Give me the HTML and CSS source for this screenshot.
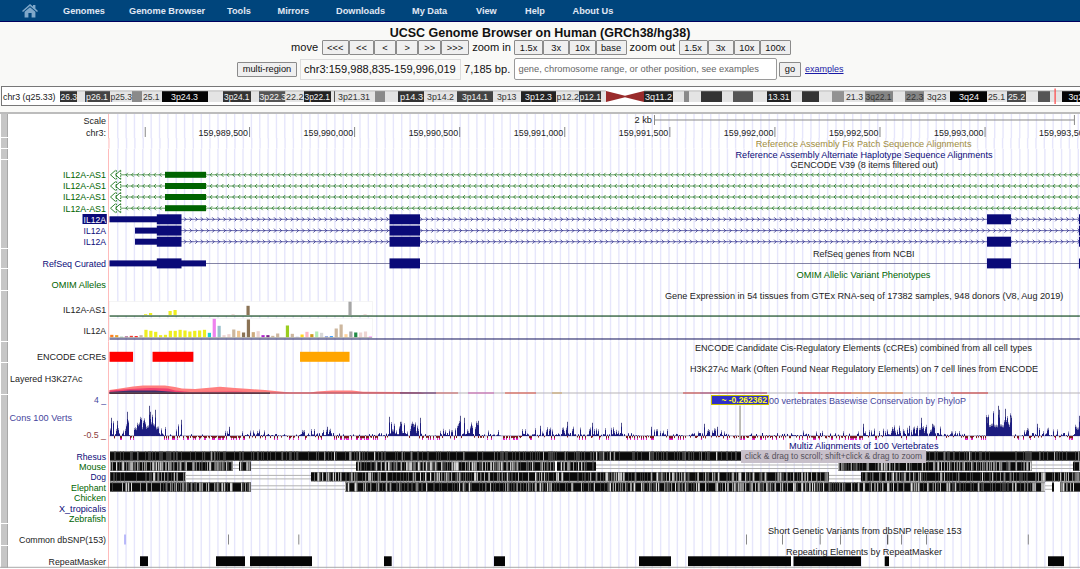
FILE: index.html
```html
<!DOCTYPE html>
<html lang="en">
<head>
<meta charset="utf-8">
<title>UCSC Genome Browser</title>
<link rel="stylesheet" href="styles.css">
</head>
<body>
<nav class="menu">
  <svg class="home" viewBox="0 0 16 14"><path d="M0 7 8 0l3 2.6V1h2.4v3.6L16 7l-1 1-7-6-7 6zM2.6 7.800 8 3.200l5.400 4.600V13.500H9.600V9H6.400v4.500H2.600z"/></svg>
  <a class="m1">Genomes</a><a class="m2">Genome Browser</a><a class="m3">Tools</a><a class="m4">Mirrors</a><a class="m5">Downloads</a><a class="m6">My Data</a><a class="m7">View</a><a class="m8">Help</a><a class="m9">About Us</a>
</nav>
<h1 class="title">UCSC Genome Browser on Human (GRCh38/hg38)</h1>
<div class="moves">
  <span class="word w-move">move</span>
  <button class="b27">&lt;&lt;&lt;</button><button class="b25">&lt;&lt;</button><button class="b22">&lt;</button><button class="b22">&gt;</button><button class="b23">&gt;&gt;</button><button class="b27">&gt;&gt;&gt;</button>
  <span class="word w-in">zoom in</span>
  <button class="b29">1.5x</button><button class="b26">3x</button><button class="b26">10x</button><button class="b31">base</button>
  <span class="word w-out">zoom out</span>
  <button class="b29">1.5x</button><button class="b26">3x</button><button class="b26">10x</button><button class="b31">100x</button>
</div>
<div class="search">
  <button class="multi">multi-region</button>
  <span class="position">chr3:159,988,835-159,996,019</span>
  <span class="size">7,185 bp.</span>
  <span class="query">gene, chromosome range, or other position, see examples</span>
  <button class="go">go</button>
  <a class="examples">examples</a>
</div>
<div class="ideogram"><svg id="ideogram" viewBox="0 86 1080 21"></svg></div>
<main class="tracks" id="tracks"></main>
<div class="value">~ -0.262362</div>
<div class="tip">click &amp; drag to scroll; shift+click &amp; drag to zoom</div>
<script src="script.js"></script>
</body>
</html>
```

FILE: styles.css
```css
* { box-sizing: border-box; }
body { margin: 0; width: 1080px; height: 569px; overflow: hidden; position: relative; background: #f9f9f7; color: #111; font-family: "Liberation Sans", Arial, sans-serif; }
.menu { height: 22px; display: flex; align-items: center; background: #00457c; border-bottom: 1px solid #00005e; color: #e0e8f4; font-weight: bold; white-space: nowrap; }
.menu a { font-size: 9.2px; }
.home { width: 16px; height: 14px; margin-left: 22px; margin-right: 25px; fill: #7fa8ca; flex: none; }
.m1 { width: 66px; } .m2 { width: 98px; } .m3 { width: 50.5px; } .m4 { width: 58.5px; } .m5 { width: 76px; }
.m6 { width: 64px; } .m7 { width: 49px; } .m8 { width: 47.5px; }
.title { margin: 4px 0 0; height: 14px; line-height: 14px; font-size: 12.5px; text-align: center; white-space: nowrap; }
.moves { display: flex; height: 15px; align-items: center; padding-left: 291px; }
.word { flex: none; font-size: 11.1px; line-height: 13px; white-space: nowrap; }
.w-move { width: 30.500px; } .w-in { width: 41.500px; padding-left: 3.500px; margin-right: 4px; } .w-out { width: 50px; padding-left: 3px; margin-right: 2px; }
button { flex: none; height: 14px; padding: 0; border: 1px solid #8b8b8b; border-radius: 1px; background: #efefef; color: #111; font: 9.300px/12px "Liberation Sans", Arial, sans-serif; }
.moves button { height: 15px; }
.b22 { width: 22.200px; } .b23 { width: 23px; } .b25 { width: 25px; } .b26 { width: 26.200px; } .b27 { width: 27.400px; } .b29 { width: 29px; } .b31 { width: 31px; }
.search { display: flex; align-items: center; height: 22px; margin-top: 3px; padding-left: 237px; white-space: nowrap; }
.search .multi { width: 60px; height: 15px; }
.position { width: 161px; height: 21px; margin-left: 3px; padding-left: 3px; border: 1px solid #ddd; font-size: 11.100px; line-height: 19px; }
.size { width: 52.500px; padding-left: 3px; font-size: 11.100px; }
.query { width: 263.500px; height: 22px; padding-left: 4px; border: 1px solid #9a9a9a; border-radius: 2px; background: #fff; color: #666; font-size: 9.300px; line-height: 20px; }
.search .go { width: 22px; height: 15px; margin: 0 4px 0 2px; }
.examples { color: #1a1aa6; text-decoration: underline; font-size: 9px; }
.ideogram { height: 21px; margin-top: 6px; }
.ideogram svg { display: block; width: 1080px; height: 21px; }
.tracks { margin-top: 5px; height: 457px; border-top: 2px solid #bcbcbc; background: #fff; display: flex; flex-direction: column; }
.track { display: flex; flex: none; }
.handle { width: 9px; flex: none; border: solid #fff; border-width: 0 1px 1.500px 1px; background: #c6c6c6; box-shadow: inset -1px 0 #a8a8a8; }
.track svg { display: block; width: 1071px; overflow: visible; flex: none; }
svg text { font-family: "Liberation Sans", Arial, sans-serif; font-size: 9.300px; }
.value { position: absolute; left: 711px; top: 395px; width: 58px; height: 10px; border: 1px solid #c8c000; background: #3030c8; color: #ffff20; font-size: 8.500px; font-weight: bold; line-height: 8px; text-align: right; padding-right: 1px; white-space: nowrap; }
.tip { position: absolute; left: 741px; top: 450px; width: 185px; height: 13px; background: #c8c0ca; color: #55505a; font-size: 8.500px; line-height: 13px; text-align: center; white-space: nowrap; }
```

FILE: script.js
```javascript
const NAVY = '#0a0a78', GREEN = '#006400', BLACK = '#222';

let state = 20177;
function rand() {
  state = (state * 1103515245 + 12345) % 2147483648;
  return state / 2147483648;
}
const rect = (x0, x1, y, h, fill, extra = '') =>
  `<rect x="${x0}" y="${y}" width="${+(x1 - x0).toFixed(2)}" height="${h}" fill="${fill}" ${extra}/>`;
const text = (s, x0, x1, y, fill = BLACK) =>
  `<text x="${x0}" y="${y}" textLength="${x1 - x0}" lengthAdjust="spacingAndGlyphs" fill="${fill}">${s}</text>`;
const label = (s, x0, y, fill) => text(s, x0, 106, y, fill);

/* Chromosome ideogram: end x, fill, band name, name start, name end */
const L = '#e4e4e4';
const bands = [
  [77, '#333', '26.3', 60.5, 77], [85, L], [110, '#444', 'p26.1', 86, 108], [132, L, 'p25.3', 110.5, 132],
  [142, '#8a8a8a'], [162, L, '25.1', 143, 159.5], [208, '#050505', '3p24.3', 171, 198], [223, L],
  [251, '#333', '3p24.1', 224, 249.5], [259, L], [285.5, '#555', '3p22.3', 259.5, 286], [304, L, '22.2', 286, 303.5],
  [331, '#222', '3p22.1', 304.5, 330], [334, L], [335, '#555'], [375, L, '3p21.31', 338, 370], [385, '#8a8a8a'],
  [398, L], [424, '#333', 'p14.3', 400, 423], [457, L, '3p14.2', 427, 454], [493, '#444', '3p14.1', 462, 488],
  [521, L, '3p13', 497, 516.500], [556, '#222', '3p12.3', 525, 552], [579, L, 'p12.2', 556.500, 579],
  [601, '#333', 'p12.1', 579.500, 601], [606, L], [644, '#fff'], [673, '#222', '3q11.2', 645, 672], [684, L],
  [689, '#8a8a8a'], [701, L], [722, '#333'], [733, L], [753, '#555'], [767, L], [791, '#222', '13.31', 768, 789.500],
  [802, L], [819, '#333'], [832, L], [844, '#929292'], [865, L, '21.3', 846, 863], [893, '#858585', '3q22.1', 865.500, 891.500],
  [905, L], [924, '#858585', '22.3', 906, 923.500], [950, L, '3q23', 927, 946.500], [987, '#050505', '3q24', 959, 979],
  [1007, L, '25.1', 988, 1005], [1026, '#4a4a4a', '25.2', 1008, 1025], [1038, L], [1050, '#555'], [1062, L],
  [1081, '#050505', '3q26', 1068.500, 1088]
];
let ideo = rect(1.500, 1085, 86.500, 19, '#fff', 'stroke="#777"') + text('chr3 (q25.33)', 3, 55.500, 99.700);
let left = 60;
for (const [end, fill] of bands) { ideo += rect(left, end, 91, 11, fill); left = end; }
ideo += rect(60, 606, 90.500, .8, '#aaa') + rect(644, 1080, 90.500, .8, '#aaa');
ideo += '<path d="M606 91 625 95.700 644 91V102L625 97.300 606 102z" fill="#992b2b"/>';
for (const [, fill, name, a, b] of bands) {
  if (name) ideo += text(name, a, b, 99.900, fill === L || fill === '#858585' ? '#333' : '#f4f4f4');
}
ideo += rect(1054.500, 1055.700, 88.500, 15.500, '#f44');
document.getElementById('ideogram').innerHTML = ideo;

/* Intron line with direction chevrons */
function intron(y, color, dir, x0, x1) {
  let d = '';
  for (let x = 111 + Math.ceil((x0 - 109) / 5.620) * 5.620; x < x1 - 1; x += 5.620) {
    d += `M${x.toFixed(2)} ${y - 2}l${dir * 2} 2l${-dir * 2} 2`;
  }
  return `<path d="M${x0} ${y}H${x1}" stroke="${color}" stroke-width=".8" opacity=".75"/><path d="${d}" fill="none" stroke="${color}" stroke-width=".8" opacity=".85"/>`;
}
function exon(x0, x1, y, half, color = NAVY) { return rect(x0, x1, y - half, half * 2, color); }

function scale() {
  let s = label('Scale', 83.500, 124) + label('chr3:', 86, 136);
  s += text('2 kb', 634.500, 652, 123.500) + '<path d="M654.500 115v10M654.500 120H1074.500M1074.500 115v10" stroke="#8a8a8a" fill="none"/>';
  s += rect(144.700, 145.700, 127, 10, '#888');
  ['989,500', '990,000', '990,500', '991,000', '991,500', '992,000', '992,500', '993,000', '993,500'].forEach((n, i) => {
    const x = 249.500 + i * 105.080;
    s += text('159,' + n, x - 51, x - 1.500, 136) + rect(x - .4, x + .5, 127, 10, '#777');
  });
  return s;
}

function genes() {
  let s = text('GENCODE V39 (8 items filtered out)', 790.500, 938, 168);
  for (const y of [174.800, 186, 197, 208.200]) {
    s += label('IL12A-AS1', 63, y + 3.400, GREEN) + intron(y, GREEN, -1, 121, 1080) + exon(165, 206, y, 3, GREEN);
    s += `<path d="M115.500 ${y - 4.500}L110.500 ${y}L115.500 ${y + 4.500}M120.500 ${y - 4.500}L115.500 ${y}L120.500 ${y + 4.500}" fill="#fff" stroke="${GREEN}" stroke-width=".8"/><path d="M116.300 ${y - 4.500}v9M120.700 ${y - 4.500}v9" stroke="${GREEN}" stroke-width=".9" stroke-dasharray="1.500 1"/>`;
  }
  [219.300, 230.600, 241.700].forEach((y, i) => {
    if (i === 0) s += rect(82.500, 106.800, 214, 10, NAVY);
    s += label('IL12A', 83.500, y + 3.400, i ? NAVY : '#fff') + intron(y, NAVY, 1, 181, 1080);
    s += exon(i ? 135 : 109.500, 157, y, 3) + exon(156.800, 181.500, y, 5) + exon(389.500, 420, y, 5);
    if (i !== 1) s += exon(987, 1011, y, 5);
    s += rect(1079, 1080, y - 5, 10, NAVY);
  });
  return s;
}

function refseq() {
  return text('RefSeq genes from NCBI', 813, 914.500, 256.500) + label('RefSeq Curated', 42.500, 266.700, NAVY) +
    rect(181, 1080, 263, .8, '#666690') + exon(109.500, 206, 263.400, 3) + exon(156.800, 181.500, 263.400, 5) +
    exon(389.500, 420, 263.400, 5) + exon(987, 1011, 263.400, 5) + rect(1079, 1080, 258.500, 10, NAVY);
}

/* Expression heights in tissue order, with tissue colours */
const tissues = [
  [8, '#ff7f20'], [7, '#ee9a20'], [2, '#2e8b57'], [3, '#8b1c62'], [5, '#ee4030'], [4, '#f00'], [7, '#cdb79e'],
  ...[23, 20, 17, 7, 8, 20, 20, 23, 21, 18, 20, 21, 23].map(h => [h, '#eeee20']),
  [14, '#20cdcd'], [56, '#ee82ee'], [35, '#9ac0cd'], [7, '#eed5d2'], [10, '#eed5d2'], [24, '#cdb79e'], [20, '#eec591'],
  [15, '#8b7355'], [54, '#8b7355'], [16, '#cdaa7d'], [19, '#eed5d2'], [7, '#b020cc'], [7, '#7a208b'], [5, '#cdb79e'],
  [12, '#cdb79e'], [0, '#fff'], [36, '#9acd20'], [11, '#cdb79e'], [2, '#9090dd'], [9, '#ffd720'], [17, '#ffb6c1'],
  [10, '#cd9b1d'], [18, '#b4eeb4'], [14, '#d9d9d9'], [3, '#3a5fcd'], [4, '#1e90ff'], [27, '#cdb79e'], [39, '#cdb79e'],
  [10, '#ffd39b'], [18, '#a6a6a6'], [15, '#208b45'], [15, '#eed5d2'], [18, '#eed5d2'], [3, '#ff80ff']
];
function expression() {
  let s = text('Gene Expression in 54 tissues from GTEx RNA-seq of 17382 samples, 948 donors (V8, Aug 2019)', 665, 1063.500, 299.500);
  s += label('IL12A-AS1', 63, 314) + label('IL12A', 83.500, 334.300);
  s += rect(109.500, 372.500, 302, 14, '#fff', 'stroke="#eee" stroke-width=".6"') + rect(109.500, 372.500, 319, 19.500, '#fff', 'stroke="#eee" stroke-width=".6"');
  for (const [x, h, c] of [[145.500, .8, '#eeee20'], [150.500, 2, '#eeee20'], [170, 4, '#eeee20'], [175, 5, '#eeee20'], [233, .8, '#eed5d2'], [248, 9.200, '#8b7355'], [350, 13.300, '#a6a6a6'], [365, .8, '#eed5d2']]) {
    s += rect(x - 1.600, x + 1.600, 315.500 - h, h, c);
  }
  tissues.forEach(([h, c], i) => { const x = 111.700 + i * 4.880; s += rect(+(x - 1.600).toFixed(2), x + 1.600, 338 - h / 3, h / 3, c); });
  return s + rect(109.500, 1080, 316, 1.100, '#003c10') + rect(109.500, 372, 337.700, .8, '#aaa') + rect(109.500, 1080, 339, 1, '#101058');
}

function ccres() {
  return text('ENCODE Candidate Cis-Regulatory Elements (cCREs) combined from all cell types', 695, 1032, 351) +
    label('ENCODE cCREs', 37, 360.700) + rect(109.500, 133, 352, 10, '#f00') + rect(152.500, 193.300, 352, 10, '#f00') +
    rect(300, 349.500, 352, 10, '#ffa500');
}

function acetylation() {
  let s = text('H3K27Ac Mark (Often Found Near Regulatory Elements) on 7 cell lines from ENCODE', 690, 1038, 372) + text('Layered H3K27Ac', 10, 82.500, 382);
  s += '<path d="M109.500 394V390.500L120 389 133 387 143 386H165L175 387.500 182 389 195 389.500 212 388 220 387.300 235 388.500 250 389.500 265 390.500 275 391.500 290 393H310L317 392 332 391H352L363 392.300 400 392.500 420 393 425 394z" fill="#ff7f7f"/>';
  s += '<path d="M109.500 394V391L130 389.500 150 388.500 168 389 175 391 190 392.500 235 392 260 393V394z" fill="#f0406e"/>';
  s += '<path d="M109.500 394V392.500L130 391 155 391 175 392.500 185 394z" fill="#40306c"/>';
  s += rect(109.500, 1080, 393, 1, '#b8b4b8') + rect(109.500, 270, 393, 1.200, '#30101c');
  for (const [a, b, c] of [[270, 400, '#c83c4c'], [400, 436, '#501050'], [436, 458, '#cc6060'], [468, 494, '#cc60b0'], [505, 536, '#dd5040'], [552, 562, '#c8a060'], [683, 700, '#cc4040'], [700, 767, '#a03060'], [798, 851, '#dd3030'], [851, 903, '#e07030'], [951, 988, '#cc3030']]) s += rect(a, b, 393, 1, c);
  return s;
}

/* Conservation profile: start, end, typical height, share of negative scores */
const profile = [
  [110, 114, 14, 0], [114, 120, 12, .2], [120, 125, 4, .4], [125, 129, 16, 0], [129, 134, 2, .6], [134, 147, 18, 0],
  [147, 152, 22, 0], [152, 159, 20, .1], [159, 166, 8, .3], [166, 176, 2, .8], [176, 182, 11, .3], [182, 225, 3, .9],
  [225, 245, 4, .7], [245, 270, 6, .3], [270, 300, 2, .6], [300, 340, 6, .3], [340, 372, 3, .85], [372, 388, 3, .5],
  [388, 402, 13, .2], [402, 422, 13, .4], [422, 440, 3, .8], [440, 452, 6, .2], [452, 480, 14, .1], [480, 500, 5, .3],
  [500, 522, 3, .8], [522, 535, 6, .4], [535, 560, 8, .3], [560, 605, 10, .25], [605, 625, 10, .3], [625, 650, 3, .7],
  [650, 668, 8, .3], [668, 690, 3, .7], [690, 730, 7, .35], [730, 790, 3, .8], [790, 805, 6, .3], [805, 860, 4, .7],
  [860, 888, 7, .4], [888, 942, 10, .15], [942, 965, 5, .5], [965, 986, 3, .9], [986, 1012, 26, 0], [1012, 1022, 2, .9],
  [1022, 1050, 7, .4], [1050, 1075, 6, .5], [1075, 1080, 18, 0]
];
const peaks = [[111, 18], [117, 15], [127, 24], [149, 30], [150, 24], [155, 26], [181, 16], [229, 9], [327, 9], [389, 19], [400, 14], [413, 12], [420, 18], [460, 20], [464, 18], [478, 15], [540, 10], [567, 14], [592, 13], [621, 13], [651, 9], [704, 12], [717, 9], [863, 12], [909, 10], [921, 18], [932, 12], [987, 18], [998, 30], [999, 26], [1005, 27], [1010, 19], [1037, 12], [1079, 20]];
function conservation() {
  let s = text('100 vertebrates Basewise Conservation by PhyloP', 764, 966, 404.200, '#46469c');
  s += text('4 _', 94, 106, 403.500, '#46469c') + text('Cons 100 Verts', 9.500, 72, 421, '#46469c') + text('-0.5 _', 83.500, 106, 438.500, '#8c3c3c');
  s += rect(109.500, 1080, 436, .7, '#77779c');
  for (const [a, b, top, negative] of profile) {
    const floor = top > 15 ? .35 : .12;
    for (let x = a; x < b; x += 1) {
      if (rand() < negative) {
        if (rand() < .75) {
          const h = 1 + rand() * 2.500;
          s += rect(x, x + 1, 436.500, h.toFixed(2), '#7c1c1c');
          if (h > 2.400) s += rect(x, x + 1, 439, 1.500, '#f020e0');
        }
      } else {
        const h = top * (floor + (1 - floor) * Math.pow(rand(), 1.700));
        s += rect(x, x + 1, (436.500 - h).toFixed(2), h.toFixed(2), '#1c1c80');
        if (h > 3) s += rect(x, x + 1, (435 - h).toFixed(2), 2, '#8c8cb4');
      }
    }
  }
  for (const [x, h] of peaks) s += rect(x, x + 1, 436.300 - h, h, '#55558c') + rect(x, x + 1, 436.300 - h * .7, h * .7, '#1c1c80');
  s += rect(739.300, 740.800, 406, 34, '#a9a9a0');
  return s + alignments();
}

/* Alignment barcodes: each segment is start, end, share of dark columns; share 0 is an unaligned gap */
const species = [
  [452, [[110, 1080, .9]]],
  [462.200, [[110, 233, .5], [233, 239, 0], [239, 251, .55], [251, 356, 0], [356, 375, .85], [375, 400, .5], [400, 440, .5], [440, 480, .7], [480, 520, .5], [520, 555, .65], [557, 596, .6], [596, 838, 0], [838, 875, .65], [875, 930, .8], [930, 1032, .62], [1032, 1073, 0], [1073, 1080, .6]]],
  [472.600, [[110, 153, .92], [153, 186, .65], [186, 311, 0], [311, 345, .65], [345, 415, .8], [415, 440, .5], [440, 540, .75], [540, 600, .82], [600, 829, .65], [829, 861, 0], [861, 925, .7], [925, 1040, .85], [1040, 1046, .1], [1046, 1060, .8], [1060, 1080, .5]]],
  [483, [[110, 180, .72], [180, 251, .62], [251, 345, 0], [345, 388, .65], [388, 505, .85], [505, 555, .6], [555, 605, .8], [605, 770, .62], [770, 822, .6], [822, 985, .78], [985, 1012, .95], [1012, 1041, .7], [1041, 1045, .1], [1045, 1052, 0], [1052, 1054, .9], [1060, 1068, .3], [1068, 1080, .65]]]
];
function alignments() {
  let s = text('Multiz Alignments of 100 Vertebrates', 789, 938.500, 449.700, NAVY);
  for (const [y, segments] of species) {
    for (const [a, b, dark] of segments) {
      if (!dark) {
        s += rect(a, b, y + 2.800, 1, '#b2b2b2') + rect(a, b, y + 6.300, 1, '#b2b2b2');
        continue;
      }
      s += rect(a, b, y, 9.200, '#0a0a0a');
      for (let x = a; x < b; x += 1) {
        if (rand() > dark) {
          const g = Math.round(90 + rand() * 135), w = Math.min(.7 + rand() * .8, b - x);
          s += rect(x, x + w, y, 9.200, dark >= .9 && rand() < .75 ? '#484848' : `rgb(${g},${g},${g})`);
        } else if (rand() < .25) {
          s += rect(x, x + 1, y, 9.200, '#3a3a3a');
        }
      }
      s += rect(a, b, y, .8, '#777', 'opacity=".5"') + rect(a, b, y + 8.400, .8, '#777', 'opacity=".5"');
    }
  }
  [['Rhesus', 76.500], ['Mouse', 79], ['Dog', 90.500], ['Elephant', 71], ['Chicken', 74], ['X_tropicalis', 59], ['Zebrafish', 69]].forEach(([n, x], i) => {
    s += label(n, x, 460 + i * 10.450, [0, 2, 5].includes(i) ? NAVY : GREEN);
  });
  return s;
}

function variants() {
  let s = text('Short Genetic Variants from dbSNP release 153', 768, 961.500, 534) + label('Common dbSNP(153)', 19, 543.500);
  for (const x of [228.500, 298.800, 746.500, 782.500, 820.200, 840.500, 887.700, 901.500, 926.500, 1028.300]) s += rect(x - .5, x + .5, 535, 10, x === 887.700 ? '#333' : '#888');
  return s + rect(124.300, 125.700, 535, 10, '#a0a0f8');
}
function repeats() {
  let s = text('Repeating Elements by RepeatMasker', 786, 942, 555) + label('RepeatMasker', 48.500, 565);
  for (const [a, b] of [[140, 148], [216, 245], [250, 312], [384, 391.700], [494, 505], [639, 671], [688, 791], [793.500, 861], [884.700, 889], [1048, 1064]]) s += rect(a, b, 556.800, 9.800, '#050505');
  return s + rect(0, 1080, 567.300, 1, '#aaa');
}

const rows = [
  [114, 138.300, scale],
  [138.300, 149, () => text('Reference Assembly Fix Patch Sequence Alignments', 756, 972, 147.300, '#a08c3c')],
  [149, 160, () => text('Reference Assembly Alternate Haplotype Sequence Alignments', 735.500, 992.500, 157.800, NAVY)],
  [160, 249, genes],
  [249, 269.500, refseq],
  [269.500, 291.500, () => text('OMIM Allelic Variant Phenotypes', 796.500, 930.500, 278.300, GREEN) + label('OMIM Alleles', 51.500, 288.300, GREEN)],
  [291.500, 342.200, expression],
  [342.200, 363.500, ccres],
  [363.500, 395.500, acetylation],
  [395.500, 524.500, conservation],
  [524.500, 546.500, variants],
  [546.500, 569, repeats]
];
let html = '';
for (const [top, bottom, draw] of rows) {
  const h = bottom - top;
  let grid = rect(108, 108.900, top, h, '#ffb4b4');
  for (let x = 117.700; x < 1080; x += 8.353) grid += rect((x - .7).toFixed(2), x + .7, top, h, '#e6e6fb');
  html += `<div class="track" style="height:${h}px"><div class="handle"></div><svg viewBox="9 ${top} 1071 ${h}" style="height:${h}px">${grid}${draw()}</svg></div>`;
}
document.getElementById('tracks').innerHTML = html;
```
